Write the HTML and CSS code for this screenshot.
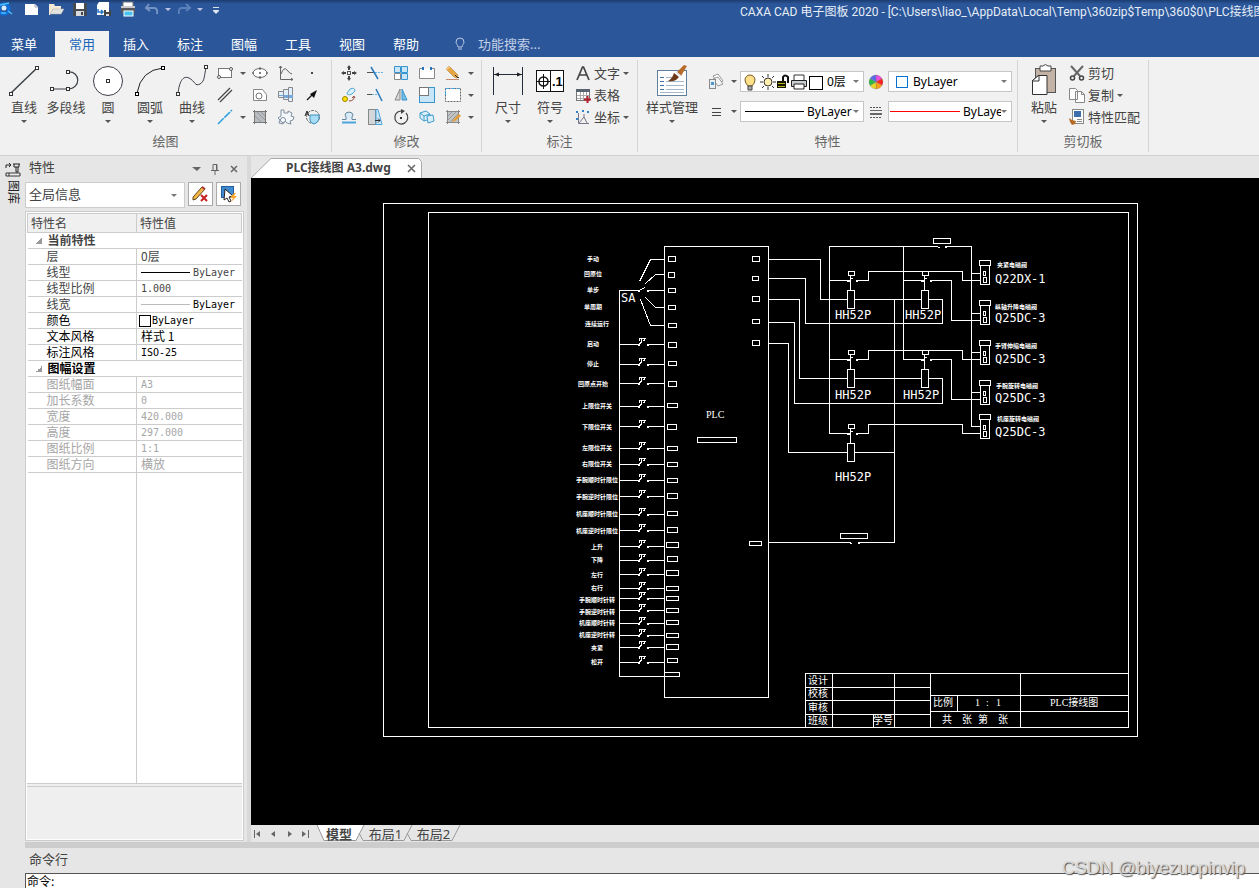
FILE: index.html
```html
<!DOCTYPE html>
<html lang="zh-CN">
<head>
<meta charset="utf-8">
<title>CAXA CAD 电子图板 2020</title>
<link rel="stylesheet" href="styles.css">
</head>
<body>
<div class="app">
<header class="titlebar">
  <div class="quick">
    <svg class="logo" width="14" height="16" viewBox="0 0 14 16"><circle cx="4" cy="8" r="5" fill="none" stroke="#0b6fe0" stroke-width="3"/><circle cx="4" cy="7" r="2.500" fill="#d7ecff"/><path d="M0 4L9 2M8 10l4 3M1 12h5" stroke="#48c0ff" stroke-width="1.500"/></svg>
    <button class="q" aria-label="新建"><svg width="16" height="16"><path d="M1 3h10l3 3v8H1z" fill="#fff"/><path d="M11 3v3h3" fill="none" stroke="#9aa7bd"/></svg></button>
    <button class="q" aria-label="打开"><svg width="16" height="16"><path d="M1 3h5l1 2h6v3H5l-3 6H1z" fill="#f3e9d6"/><path d="M5 8h11l-3 5H2z" fill="#e2e2e0" stroke="#b6b0a4" stroke-width=".5"/></svg></button>
    <button class="q" aria-label="保存"><svg width="16" height="16"><rect x="1" y="2" width="14" height="13" rx="1" fill="#444a52"/><rect x="4" y="2" width="8" height="6" fill="#fff"/><rect x="4" y="10" width="8" height="5" fill="#d6dade"/><rect x="9" y="11" width="2" height="3" fill="#444"/></svg></button>
    <button class="q" aria-label="另存为"><svg width="16" height="16"><path d="M3 1h10v13H1V4z" fill="#fff"/><path d="M2 8v3h5M5 9l2 2-2 2" fill="none" stroke="#2878c8" stroke-width="1.500"/><rect x="8" y="9" width="7" height="6" fill="#444"/><rect x="10" y="9" width="3" height="2" fill="#fff"/><rect x="10" y="13" width="3" height="2" fill="#ddd"/></svg></button>
    <button class="q" aria-label="打印"><svg width="16" height="16"><rect x="3" y="1" width="10" height="5" fill="#fff" stroke="#777"/><rect x="1" y="6" width="14" height="6" fill="#55585c"/><rect x="1" y="5" width="14" height="2" fill="#c9c9c9"/><rect x="4" y="10" width="9" height="5" fill="#43c3ee" stroke="#fff"/></svg></button>
    <button class="q" aria-label="撤销"><svg width="16" height="16"><path d="M5 3L2 7l4 3M2 7h8q4 0 3 6" fill="none" stroke="#7593c3" stroke-width="2"/></svg></button>
    <button class="q narrow" aria-label="撤销列表"><span class="caret light"></span></button>
    <button class="q" aria-label="重做"><svg width="16" height="16"><path d="M10 3l4 4-4 3M14 7H6q-4 0-3 6" fill="none" stroke="#5b80ba" stroke-width="2"/></svg></button>
    <button class="q narrow" aria-label="重做列表"><span class="caret light"></span></button>
    <button class="q" aria-label="自定义"><svg width="16" height="16"><path d="M5 6.500h6M5 9.500h6" stroke="#dce4f0"/><path d="M5 10h6l-3 3z" fill="#dce4f0"/></svg></button>
  </div>
  <h1 class="title">CAXA CAD 电子图板 2020 - [C:\Users\liao_\AppData\Local\Temp\360zip$Temp\360$0\PLC接线图</h1>
</header>
<nav class="tabs">
  <button class="tab menu">菜单</button><button class="tab active">常用</button><button class="tab">插入</button><button class="tab">标注</button><button class="tab">图幅</button><button class="tab">工具</button><button class="tab">视图</button><button class="tab">帮助</button>
  <label class="search"><svg width="12" height="14"><path d="M4 10C4 8 2 7 2 5a4 4 0 018 0c0 2-2 3-2 5zM4 12h4" fill="none" stroke="#b9c8e0"/></svg><input type="text" aria-label="功能搜索" placeholder="功能搜索..."></label>
</nav>

<section class="ribbon">
  <div class="group g-draw">
    <div class="body">
      <button class="big"><svg width="34" height="34"><path d="M4 29L30 4" stroke="#3c4048" stroke-width="1.500"/><g fill="#fff" stroke="#333"><rect x="2.500" y="28.500" width="3" height="3"/><rect x="28.500" y="2.500" width="3" height="3"/></g></svg><span>直线</span><i class="caret"></i></button>
      <button class="big"><svg width="34" height="34"><path d="M3 25H19M19 8C32 7 32 25 19 25" fill="none" stroke="#3c4048" stroke-width="1.200"/><g fill="#fff" stroke="#333"><rect x="1.500" y="23.500" width="3" height="3"/><rect x="17.500" y="23.500" width="3" height="3"/><rect x="17.500" y="6.500" width="3" height="3"/></g></svg><span>多段线</span></button>
      <button class="big"><svg width="34" height="34"><circle cx="17" cy="17" r="14.500" fill="#fff" stroke="#3c4048"/><rect x="15.500" y="15.500" width="3" height="3" fill="none" stroke="#333"/></svg><span>圆</span><i class="caret"></i></button>
      <button class="big"><svg width="34" height="34"><path d="M4 29Q8 6 30 4" fill="none" stroke="#222"/><g fill="#fff" stroke="#000"><rect x="2.500" y="28.500" width="3" height="3"/><rect x="28.500" y="2.500" width="3" height="3"/></g></svg><span>圆弧</span><i class="caret"></i></button>
      <button class="big"><svg width="34" height="34"><path d="M3 30C4 18 8 11 14 14S20 23 25 20 29 12 31 4" fill="none" stroke="#3c4048"/><g fill="#fff" stroke="#333"><rect x="1.500" y="28.500" width="3" height="3"/><rect x="29.500" y="1.500" width="3" height="3"/></g></svg><span>曲线</span><i class="caret"></i></button>
      <div class="tools draw">
        <button aria-label="矩形"><svg width="16" height="16"><rect x="1.500" y="3.500" width="13" height="9" fill="#fff" stroke="#777"/><circle cx="2" cy="12" r="1.500" fill="#fff" stroke="#555"/><circle cx="14" cy="4" r="1.500" fill="#fff" stroke="#555"/></svg></button>
        <button aria-label="矩形选项"><i class="caret"></i></button>
        <button aria-label="椭圆"><svg width="16" height="16"><ellipse cx="8" cy="8" rx="7" ry="4.500" fill="#fff" stroke="#666"/><path d="M8 2v3M8 7v2M0 8h2M14 8h2M8 11v3M7 8h2" stroke="#555"/></svg></button>
        <button aria-label="公式曲线"><svg width="16" height="16"><path d="M2.500 1v13.500H15M3 9Q6 1 9 5T14 9" fill="none" stroke="#666"/><path d="M1 3l1.500-2L4 3M13 13l2 1.500-2 1" fill="none" stroke="#666"/></svg></button>
        <button aria-label="点"><svg width="16" height="16"><rect x="7" y="7" width="2" height="2" fill="#444"/></svg></button>
        <button aria-label="平行线"><svg width="16" height="16"><path d="M1 13L13 1M3 15L15 3" stroke="#444" stroke-width="1.200"/></svg></button><span></span>
        <button aria-label="填充"><svg width="16" height="16"><path d="M1.500 2.500h9l4 5v6h-13z" fill="#fff" stroke="#888"/><circle cx="7" cy="9" r="3" fill="none" stroke="#777"/></svg></button>
        <button aria-label="轴孔"><svg width="16" height="16"><path d="M.5 4.500h5v-2h5v-2h4v14h-4v-2h-5v-2h-5z" fill="#e1f0fb" stroke="#888"/><path d="M1 8h14v3H5V9H1z" fill="#75a9da"/><path d="M5.500 3v9M10.500 1v13" stroke="#889"/></svg></button>
        <button aria-label="箭头"><svg width="16" height="16"><path d="M3 13L9 7" stroke="#222" stroke-width="1.500"/><path d="M13 3l-3 8-4-4z" fill="#111"/></svg></button>
        <button aria-label="构造线"><svg width="16" height="16"><path d="M1 15L15 1" stroke="#29a0dc" stroke-width="1.500" stroke-dasharray="8 1"/></svg></button>
        <button aria-label="构造线选项"><i class="caret"></i></button>
        <button aria-label="剖面线"><svg width="16" height="16"><rect x="2.500" y="2.500" width="11" height="11" fill="#b8bcc0"/><path d="M1 2.500h14M1 13.500h14M2.500 1v14M13.500 1v14" stroke="#777"/><path d="M5 3l8 8M3 7l6 6M9 3l4 4" stroke="#999"/></svg></button>
        <button aria-label="齿轮"><svg width="16" height="16"><path d="M3 1h3v3h4V2l4 2-1 3 3 1-1 3-3 1 1 3-4-1-2-2-2 3-4-1 1-3-2-2 3-2z" fill="#f4f8fb" stroke="#8090a0"/><circle cx="5" cy="11" r="2.500" fill="#fff" stroke="#789"/></svg></button>
        <button aria-label="局部放大"><svg width="16" height="16"><circle cx="9" cy="8" r="6.500" fill="none" stroke="#666" stroke-dasharray="3 1"/><path d="M6 6h9v4q-1 4-5 5-4-1-4-4z" fill="#a7dcf4" stroke="#3d91be"/><path d="M1 7l2-5 2 5M2 5h2" fill="none" stroke="#222"/></svg></button>
      </div>
    </div>
    <h2>绘图</h2>
  </div>
  <div class="group g-edit">
    <div class="body">
      <div class="tools edit">
        <button aria-label="平移"><svg width="16" height="16"><path d="M8 0l2 3H6zM8 16l2-3H6zM0 8l3-2v4zM16 8l-3-2v4z" fill="#444"/><rect x="6.500" y="6.500" width="3" height="3" fill="none" stroke="#555"/><path d="M8 3v2M8 11v2M3 8h2M11 8h2" stroke="#444" stroke-width="2"/></svg></button>
        <button aria-label="裁剪"><svg width="16" height="16"><path d="M0 7.500h8" stroke="#555"/><path d="M8 7.500h8" stroke="#69b4e0" stroke-dasharray="2 1"/><path d="M4 2l7 12" stroke="#2879bd" stroke-width="1.500"/></svg></button>
        <button aria-label="阵列"><svg width="16" height="16"><g fill="#c9e5f8" stroke="#3794cf"><path d="M1.500 1.500h6v6h-6zM8.500 1.500h6v6h-6zM8.500 8.500h6v6h-6z"/></g><path d="M1.500 8.500h6v6h-6z" fill="#fff" stroke="#888"/></svg></button>
        <button aria-label="打断"><svg width="16" height="16"><path d="M5 3.500H.5v10h15v-10H11" fill="#fff" stroke="#888"/><rect x="3" y="2" width="2" height="3" fill="#2177c3"/><rect x="11" y="2" width="2" height="3" fill="#2177c3"/></svg></button>
        <button aria-label="删除"><svg width="16" height="16"><path d="M1 4l3-3 9 9-1 3-3-1z" fill="#e6a743" stroke="#ad7423" stroke-width=".5"/><path d="M1 4l3-3 1 1-3 3z" fill="#f7cf96"/><path d="M10 10l3 3 1-1" stroke="#333" fill="none"/><path d="M1 14.500h13" stroke="#c68a70"/></svg></button>
        <button aria-label="删除选项"><i class="caret"></i></button>
        <button aria-label="复制"><svg width="16" height="16"><circle cx="4" cy="12" r="2.500" fill="#ffe100" stroke="#9a8400"/><path d="M6 6l3-4q5-2 5 2l-3 3q-5 2-5-1z" fill="#d9effb" stroke="#54a9d6"/><path d="M8 14q5 0 5-4M11 11l2-2 1 2" fill="none" stroke="#9c4940"/></svg></button>
        <button aria-label="延伸"><svg width="16" height="16"><path d="M0 7.500h5" stroke="#555"/><path d="M5 7.500h7" stroke="#69b4e0" stroke-dasharray="2 1"/><path d="M9 2l6 12" stroke="#2879bd" stroke-width="1.500"/></svg></button>
        <button aria-label="镜像"><svg width="16" height="16"><path d="M7 2v11H2z" fill="#d8d8d8" stroke="#888"/><path d="M9 2v11h5z" fill="#75bce4" stroke="#3794cf"/></svg></button>
        <button aria-label="缩放"><svg width="16" height="16"><rect x=".5" y=".5" width="15" height="15" fill="#c9e5f8" stroke="#3794cf"/><rect x=".5" y=".5" width="9" height="8" fill="#fff" stroke="#777"/></svg></button>
        <button aria-label="选择框"><svg width="16" height="16"><rect x=".5" y="1.500" width="15" height="13" fill="#fff" stroke="#666" stroke-dasharray="2 1"/><path d="M.5 8V1.500H15" fill="none" stroke="#4aa5df" stroke-dasharray="4 2"/></svg></button>
        <button aria-label="选择选项"><i class="caret"></i></button>
        <button aria-label="等距线"><svg width="16" height="16"><path d="M1 10.500h4V8q-2-2 0-4 3-2 6 0 2 2 0 4v2.500h4" fill="#d8eaf5" stroke="#63869d"/><path d="M1 13.500h14" stroke="#4aa5df" stroke-width="2"/></svg></button>
        <button aria-label="拉伸"><svg width="16" height="16"><rect x="1.500" y=".5" width="7" height="15" fill="#d3d7da" stroke="#888"/><path d="M9 .5h2l4 15H9z" fill="#cce8f8" stroke="#4aa5df"/><path d="M8 11.500h5m-2-2l2 2-2 2" fill="none" stroke="#333"/></svg></button>
        <button aria-label="旋转"><svg width="16" height="16"><path d="M8 2a6.500 6.500 0 105 2" fill="none" stroke="#444" stroke-width="1.200"/><path d="M8 0l4 2-4 3z" fill="#444"/><rect x="7" y="8" width="2" height="2" fill="#333"/></svg></button>
        <button aria-label="分解"><svg width="16" height="16"><path d="M1 4l6-2 4 3v5l-6 2-4-3zM5 7l6-2M5 7v5M1 4l4 3" fill="#d9effb" stroke="#429dcc"/><path d="M8 7l6-1 1 6-6 2z" fill="#d9effb" stroke="#429dcc"/></svg></button>
        <button aria-label="编辑填充"><svg width="16" height="16"><path d="M1 2.500h14M1 13.500h14M2.500 1v14M13.500 1v14" stroke="#888"/><rect x="3" y="3" width="10" height="10" fill="#c2c5c8"/><path d="M3 7l4-4M3 11l8-8M5 13l8-8" stroke="#999"/><path d="M8 11l6-6 2 2-6 5-3 1z" fill="#e39d35"/></svg></button>
        <button aria-label="填充选项"><i class="caret"></i></button>
      </div>
    </div>
    <h2>修改</h2>
  </div>
  <div class="group g-note">
    <div class="body">
      <button class="big"><svg width="34" height="34"><path d="M2.500 3v28M31.500 3v28M3 10.500h28" stroke="#222c3a"/><path d="M3 10.500l5-2v4zM31 10.500l-5-2v4z" fill="#222"/></svg><span>尺寸</span><i class="caret"></i></button>
      <button class="big"><svg width="34" height="34"><rect x="3.500" y="6.500" width="27" height="21" fill="#fff" stroke="#111"/><path d="M17.500 6v22M4 17.500h13M10.500 10v15" stroke="#111"/><circle cx="10.500" cy="17.500" r="4.500" fill="none" stroke="#111" stroke-width="1.500"/><text x="19" y="22" class="tolerance">.1</text></svg><span>符号</span><i class="caret"></i></button>
      <div class="list">
        <button><svg width="16" height="16"><path d="M2 15L7.500 2h1L14 15M4 10h8" fill="none" stroke="#444" stroke-width="1.700"/></svg>文字<i class="caret"></i></button>
        <button><svg width="16" height="16"><rect x="1.500" y="2.500" width="13" height="11" fill="#fff" stroke="#777"/><path d="M1 2h14v3H1z" fill="#596470"/><path d="M2 8.500h12M2 11.500h12M5.500 5v8M8.500 5v8M11.500 5v8" stroke="#aaa"/><path d="M12.500 9v7M9 12.500h7" stroke="#b71e2d" stroke-width="2"/></svg>表格</button>
        <button><svg width="16" height="16"><path d="M3.500 4v10.500H14M4 14l5-6 3 6M9 8V5" fill="none" stroke="#778"/><g fill="#2f83cb"><rect x="1" y="2" width="2" height="2"/><rect x="7" y="1" width="2" height="2"/><rect x="12" y="2" width="2" height="2"/><rect x="1" y="9" width="2" height="2"/></g></svg>坐标<i class="caret"></i></button>
      </div>
    </div>
    <h2>标注</h2>
  </div>
  <div class="group g-prop">
    <div class="body">
      <button class="big wide"><svg width="34" height="34"><rect x="2.500" y="6.500" width="29" height="25" fill="#fff" stroke="#5f7f9c"/><path d="M5 13.500h4M5 17.500h4M5 21.500h4M5 25.500h4" stroke="#4670a0"/><path d="M11 13.500h8M11 17.500h18M11 21.500h18M11 25.500h18M5 28.500h24" stroke="#a7b7cb"/><path d="M22 8l7-7 3 1-6 10z" fill="#b66b28"/><path d="M19 9l5 4-3 3q-4 2-8 1 4-2 6-8z" fill="#6d3a18"/><path d="M21 8l5 4" stroke="#ddd" stroke-width="1.500"/></svg><span>样式管理</span><i class="caret"></i></button>
      <div class="props">
        <button class="split" aria-label="图层工具"><svg width="16" height="16"><path d="M5 2l5-2 5 7-5 2z" fill="#fff" stroke="#999"/><path d="M5 5l5-2 5 7-5 2z" fill="#f4f4f4" stroke="#999"/><rect x="1.500" y="5.500" width="6" height="9" fill="#e7f0f7" stroke="#888"/><rect x="3" y="8" width="3" height="3" fill="#4b95c7"/></svg><i class="caret"></i></button>
        <div class="combo">
          <svg width="84" height="20" viewBox="0 0 84 20"><path d="M7 14q-3-3-3-6a5 5 0 0110 0q0 3-3 6z" fill="#ffe08a" stroke="#775a20"/><path d="M7 14h4v4H7z" fill="#aaa" stroke="#444"/><circle cx="27" cy="10" r="4" fill="#fff0b0" stroke="#333"/><path d="M27 2v3M27 15v3M19 10h3M32 10h3M21 4l2 2M31 14l2 2M33 4l-2 2M21 16l2-2" stroke="#333"/><path d="M36 9h9v7h-9z" fill="#171700"/><path d="M37 11.500h7M37 14.500h7" stroke="#b7b521"/><path d="M42 9V5q2-3 5 0v6" fill="none" stroke="#111" stroke-width="2"/><path d="M53 8V3h10v5" fill="#fff" stroke="#333"/><path d="M50.500 8.500h15v6h-15z" fill="#c9ced3" stroke="#222"/><path d="M53 12h10v5H53z" fill="#fff" stroke="#222"/><rect x="68.500" y="4.500" width="13" height="13" fill="#fff" stroke="#000"/></svg>
          <select aria-label="图层"><option>0层</option></select><i class="caret"></i>
        </div>
        <svg class="mid" width="16" height="16"><g stroke="#777" stroke-width=".3"><path d="M8 8V1a7 7 0 016 3.500z" fill="#f04be0"/><path d="M8 8l6-3.500a7 7 0 010 7z" fill="#f22"/><path d="M8 8l6 3.500A7 7 0 018 15z" fill="#ff9d18"/><path d="M8 8v7a7 7 0 01-6-3.500z" fill="#e8d82a"/><path d="M8 8l-6 3.500a7 7 0 010-7z" fill="#2abb46"/><path d="M8 8L2 4.500A7 7 0 018 1z" fill="#5d6be8"/></g></svg>
        <div class="combo">
          <svg width="22" height="20"><rect x="7.500" y="4.500" width="11" height="11" fill="#fff" stroke="#0073d4"/></svg>
          <select aria-label="颜色"><option>ByLayer</option></select><i class="caret"></i>
        </div>
        <button class="split" aria-label="线型工具"><svg width="16" height="16"><path d="M4 4.500h9M4 8.500h9M4 11.500h9" stroke="#444"/></svg><i class="caret"></i></button>
        <div class="combo">
          <svg width="64" height="19"><path d="M4 9.500h59" stroke="#000"/></svg>
          <select aria-label="线型"><option>ByLayer</option></select><i class="caret"></i>
        </div>
        <svg class="mid" width="16" height="16"><path d="M2 3.500h12M2 13.500h12" stroke="#555" stroke-dasharray="2 1"/><path d="M2 6.500h12" stroke="#666"/><path d="M2 10h12" stroke="#666" stroke-width="2"/></svg>
        <div class="combo">
          <svg width="72" height="19"><path d="M1 9.500h70" stroke="#f00"/></svg>
          <select aria-label="线宽"><option>ByLayer</option></select><i class="caret"></i>
        </div>
      </div>
    </div>
    <h2>特性</h2>
  </div>
  <div class="group g-clip">
    <div class="body">
      <button class="big"><svg width="34" height="34"><rect x="8.500" y="4.500" width="20" height="24" fill="#c3b3a6" stroke="#555"/><path d="M13 2h3q2-3 5 0h3v5H13z" fill="#fff" stroke="#444"/><path d="M11.500 11.500H20v19H5.500v-14z" fill="#fff" stroke="#333"/><path d="M5 17l7-6v6z" fill="#fff" stroke="#333"/></svg><span>粘贴</span><i class="caret"></i></button>
      <div class="list">
        <button><svg width="16" height="16"><path d="M2 1l9 10M14 1L5 11" stroke="#666" stroke-width="2"/><circle cx="3.500" cy="13" r="2" fill="none" stroke="#444" stroke-width="1.500"/><circle cx="12.500" cy="13" r="2" fill="none" stroke="#444" stroke-width="1.500"/></svg>剪切</button>
        <button><svg width="16" height="16"><path d="M.5 1.500h6l2 2v9h-8zM6.500 4.500h6l3 3v8h-9z" fill="#fff" stroke="#888"/><path d="M12.500 4.500v3h3" fill="none" stroke="#888"/></svg>复制<i class="caret"></i></button>
        <button><svg width="16" height="16"><rect x="3.500" y=".5" width="11" height="14" fill="#fff" stroke="#888"/><rect x="5" y="2" width="7" height="6" fill="#3c6eac"/><path d="M8 10.500h5M8 12.500h5" stroke="#888"/><path d="M0 9l3 2 4 1-1 3-3 1-2-3z" fill="#b76b28"/></svg>特性匹配</button>
      </div>
    </div>
    <h2>剪切板</h2>
  </div>
</section>

<main class="workspace">
  <aside class="rail"><button><svg width="16" height="15"><path d="M1 6V3h5M4 1l2 2-2 2M8 2h7M9 2v3h5V2M11 5v5h2V5" fill="none" stroke="#222"/><path d="M1 11h14v3H1zM4 11v3" fill="#eee" stroke="#333"/></svg><span>图库</span></button></aside>
  <div class="content">
    <div class="upper">
      <aside class="panel">
        <div class="panel-head"><h2>特性</h2>
          <button aria-label="菜单"><svg width="12" height="12"><path d="M2 4h9l-4 4z" fill="#666"/></svg></button>
          <button aria-label="固定"><svg width="12" height="12"><path d="M4 7V1.500h4V7M7.500 2v5M2 7.500h8M6 8v4" fill="none" stroke="#666"/></svg></button>
          <button aria-label="关闭"><svg width="12" height="12"><path d="M3 3l6 6M9 3l-6 6" stroke="#666" stroke-width="1.500"/></svg></button>
        </div>
        <div class="picker">
          <div class="scope"><select aria-label="选择范围"><option>全局信息</option></select><i class="caret"></i></div>
          <button aria-label="清除选择"><svg width="18" height="18"><path d="M1 12L10 2l3 2L4 14l-3 1z" fill="#f1b548" stroke="#5f4720"/><path d="M10 2l3 2" stroke="#a33" stroke-width="2"/><path d="M9 10l6 6M15 10l-6 6" stroke="#c5221d" stroke-width="2"/></svg></button>
          <button aria-label="快速选择"><svg width="18" height="18"><rect x="1.500" y="1.500" width="12" height="11" fill="#3f8bd0" stroke="#235f9c"/><path d="M5 4l8 7-4 1 2 4-2 1-2-4-3 2z" fill="#fff" stroke="#222"/><path d="M14 8l-4 5h3l-2 4 6-6h-3l2-3z" fill="#ffa62a"/></svg></button>
        </div>
        <div class="grid-frame">
          <table>
            <thead><tr><th scope="col">特性名</th><th scope="col">特性值</th></tr></thead>
            <tbody>
              <tr class="section"><th colspan="2">当前特性</th></tr>
              <tr><th scope="row">层</th><td>0层</td></tr>
              <tr><th scope="row">线型</th><td class="line"><span class="mono"><i class="stroke dark"></i>ByLayer</span></td></tr>
              <tr><th scope="row">线型比例</th><td class="mono">1.000</td></tr>
              <tr><th scope="row">线宽</th><td class="line strong"><span class="mono"><i class="stroke"></i>ByLayer</span></td></tr>
              <tr class="strong"><th scope="row">颜色</th><td class="color"><span class="mono"><i class="swatch"></i>ByLayer</span></td></tr>
              <tr class="strong"><th scope="row">文本风格</th><td>样式 1</td></tr>
              <tr class="strong"><th scope="row">标注风格</th><td class="mono">ISO-25</td></tr>
              <tr class="section strong"><th colspan="2">图幅设置</th></tr>
              <tr class="off"><th scope="row">图纸幅面</th><td class="mono">A3</td></tr>
              <tr class="off"><th scope="row">加长系数</th><td class="mono">0</td></tr>
              <tr class="off"><th scope="row">宽度</th><td class="mono">420.000</td></tr>
              <tr class="off"><th scope="row">高度</th><td class="mono">297.000</td></tr>
              <tr class="off"><th scope="row">图纸比例</th><td class="mono">1:1</td></tr>
              <tr class="off"><th scope="row">图纸方向</th><td>横放</td></tr>
            </tbody>
          </table>
          <div class="blank"><span></span></div>
          <div class="hint"></div>
        </div>
      </aside>
      <section class="document">
        <div class="doc-tabs"><div class="doc-tab"><svg width="171" height="20"><path d="M0 20L20 .5H167.500L170.500 3.500V20" fill="#fff" stroke="#aaa"/></svg><span>PLC接线图 A3.dwg</span><button aria-label="关闭文档"><svg width="9" height="9"><path d="M1 1l7 7M8 1L1 8" stroke="#666" stroke-width="1.500"/></svg></button></div></div>
        <div class="canvas">
          <svg class="drawing" width="100%" height="100%" role="img" aria-label="PLC接线图">
            <defs>
              <g id="sw"><path d="M619 0H639M646 0H664M638 0L642 -3M641 -2V-6M639 -4V-6H645M644 -6V-4H642"/><path d="M637 1h2M646 1h2"/></g>
              <g id="relay"><path d="M-4 10H3V28H-4ZM-1 -5V10M-4 1L2 -3M-4 1h2M4 1h2"/><path d="M-3 -9H3V-5H-3Z"/></g>
              <g id="valve"><path d="M979 -24H990V-19H979ZM980 -19H989V0H980ZM983 -13H985V-9H983ZM983 -7H986V-2H983Z"/></g>
            </defs>
            <g class="ink" transform="translate(-250.500 -177.500)">
              <path d="M383 203H1137V736H383ZM428 212H1128V727H428Z"/>
              <path d="M664 246H768V697H664ZM697 437H736V442H697Z"/>
              <path d="M638 290H619V676H664M664 259H650L639 281M664 274H655L645 283M664 290H646M638 290L645 287M664 307H655L645 297M664 325H650L640 299M637 291h2M646 291h2"/>
              <path d="M668 256h7v5h-7zM668 272h6v5h-6zM668 288h7v4h-7zM668 305h7v4h-7zM668 323h8v4h-8zM668 342h8v5h-8zM668 361h8v4h-8zM668 381h8v5h-8zM667 403h10v4h-10zM667 424h9v5h-9zM667 446h10v4h-10zM667 462h10v4h-10zM667 478h10v4h-10zM667 493h10v5h-10zM667 511h10v4h-10zM667 527h10v5h-10zM666 542h12v5h-12zM667 556h10v5h-10zM666 570h12v5h-12zM666 586h12v4h-12zM666 596h12v4h-12zM666 608h12v4h-12zM666 620h12v4h-12zM666 633h12v4h-12zM666 644h12v5h-12zM667 658h10v4h-10zM664 672h15v4h-15z"/>
              <path d="M752 256h7v5h-7zM752 276h6v4h-6zM752 296h7v5h-7zM752 319h7v4h-7zM752 340h7v5h-7zM749 541h12v4h-12z"/>
              <use href="#sw" y="344"/><use href="#sw" y="364"/><use href="#sw" y="383"/><use href="#sw" y="406"/><use href="#sw" y="426"/><use href="#sw" y="448"/><use href="#sw" y="464"/><use href="#sw" y="480"/><use href="#sw" y="496"/><use href="#sw" y="514"/><use href="#sw" y="530"/><use href="#sw" y="546"/><use href="#sw" y="560"/><use href="#sw" y="574"/><use href="#sw" y="588"/><use href="#sw" y="598"/><use href="#sw" y="610"/><use href="#sw" y="623"/><use href="#sw" y="635"/><use href="#sw" y="647"/><use href="#sw" y="662"/>
              <path d="M768 259H820V299H847M768 278H805V323H942V299H928M768 299H799V378H847M768 322H794V403H942V378H928M768 343H788V452H847M854 299H921M854 378H921M854 452H894"/>
              <path d="M768 542H850M857 542H894V298M849 543h2M857 543h2M840 533H867V538H840Z"/>
              <path d="M847 433H829V246H937M944 246H971V426H980M937 247h2M944 247h2M933 238H950V243H933ZM903 246V359H921M903 280H921M829 280H847M829 359H847"/>
              <path d="M971 273H980M971 313H980M971 352H980M971 392H980"/>
              <path d="M855 280H868V271H962V280H980M929 280H951V320H980M855 359H868V350H962V359H980M929 359H951V399H980M855 433H868V424H962V433H980"/>
              <use href="#relay" x="851" y="280"/><use href="#relay" x="925" y="280"/><use href="#relay" x="851" y="359"/><use href="#relay" x="925" y="359"/><use href="#relay" x="851" y="433"/>
              <use href="#valve" y="284"/><use href="#valve" y="324"/><use href="#valve" y="364"/><use href="#valve" y="404"/><use href="#valve" y="438"/>
              <path d="M805 727V673H1128M832 673V727M873 714V727M894 673V727M930 673V727M957 695V711M1020 673V727M805 687H930M805 700H930M805 714H930M930 695H1128M930 711H1128"/>
            </g>
            <g class="lettering" transform="translate(-251 -178)">
              <g class="tag"><text x="593" y="261">手动</text><text x="593" y="276">回原位</text><text x="593" y="292">单步</text><text x="593" y="309">单周期</text><text x="597" y="326">连续运行</text><text x="593" y="346">启动</text><text x="593" y="366">停止</text><text x="593" y="386">回原点开始</text><text x="597" y="408">上限位开关</text><text x="597" y="429">下限位开关</text><text x="597" y="450">左限位开关</text><text x="597" y="466">右限位开关</text><text x="597" y="482">手腕顺时针限位</text><text x="597" y="499">手腕逆时针限位</text><text x="597" y="516">机座顺时针限位</text><text x="597" y="533">机座逆时针限位</text><text x="597" y="549">上升</text><text x="597" y="562">下降</text><text x="597" y="577">左行</text><text x="597" y="590">右行</text><text x="597" y="602">手腕顺时针转</text><text x="597" y="614">手腕逆时针转</text><text x="597" y="625">机座顺时针转</text><text x="597" y="637">机座逆时针转</text><text x="597" y="650">夹紧</text><text x="597" y="664">松开</text>
              <text x="1012" y="267">夹紧电磁阀</text><text x="1016" y="309">纵轴升降电磁阀</text><text x="1016" y="348">手臂伸缩电磁阀</text><text x="1017" y="388">手腕旋转电磁阀</text><text x="1018" y="421">机座旋转电磁阀</text></g>
              <g class="cad"><text x="621" y="302">SA</text><text x="835" y="319">HH52P</text><text x="905" y="319">HH52P</text><text x="835" y="399">HH52P</text><text x="903" y="399">HH52P</text><text x="835" y="481">HH52P</text><text x="995" y="283">Q22DX-1</text><text x="995" y="322">Q25DC-3</text><text x="995" y="363">Q25DC-3</text><text x="995" y="402">Q25DC-3</text><text x="995" y="436">Q25DC-3</text></g>
              <g class="block"><text x="706" y="418">PLC</text><text x="808" y="684">设计</text><text x="808" y="697">校核</text><text x="808" y="711">审核</text><text x="808" y="724">班级</text><text x="873" y="724">学号</text><text x="933" y="706">比例</text><text x="975" y="706">1</text><text x="986" y="706">:</text><text x="996" y="706">1</text><text x="1050" y="706">PLC接线图</text><text x="942" y="723">共</text><text x="962" y="723">张</text><text x="978" y="723">第</text><text x="998" y="723">张</text></g>
            </g>
          </svg>
        </div>
        <div class="layouts">
          <div class="nav">
            <button aria-label="第一个"><svg width="9" height="8"><path d="M1.500 0v8" stroke="#666"/><path d="M7 1v6L3 4z" fill="#666"/></svg></button>
            <button aria-label="上一个"><svg width="9" height="8"><path d="M6 1v6L2 4z" fill="#666"/></svg></button>
            <button aria-label="下一个"><svg width="9" height="8"><path d="M3 1v6l4-3z" fill="#666"/></svg></button>
            <button aria-label="最后一个"><svg width="9" height="8"><path d="M1 1v6l4-3z" fill="#666"/><path d="M7.500 0v8" stroke="#666"/></svg></button>
          </div>
          <button class="sheet on"><svg width="50" height="17"><path d="M1 0l7 15.500h32L48 0" fill="#fff" stroke="#999"/></svg><span>模型</span></button>
          <button class="sheet"><svg width="50" height="17"><path d="M-5 8l4 7.500H40L48 0" fill="none" stroke="#999"/></svg><span>布局1</span></button>
          <button class="sheet"><svg width="50" height="17"><path d="M-5 8l4 7.500H40L48 0" fill="none" stroke="#999"/></svg><span>布局2</span></button>
        </div>
      </section>
    </div>
    <div class="splitter"></div>
    <section class="command">
      <h2>命令行</h2>
      <label class="prompt">命令:<input type="text" aria-label="命令"></label>
    </section>
  </div>
</main>
<p class="watermark">CSDN @biyezuopinvip</p>
</div>
</body>
</html>
```
FILE: styles.css
```css
* { box-sizing: border-box; }
body { margin: 0; font: 13px/18px "Noto Sans", "Noto Sans CJK SC", sans-serif; color: #444; }
button, input, select { font: inherit; color: inherit; border: 0; background: none; padding: 0; margin: 0; }
h1, h2, p { margin: 0; font-size: 13px; font-weight: 400; }
svg { display: block; flex: none; overflow: visible; }
.app { position: relative; height: 100vh; display: flex; flex-direction: column; overflow: hidden; background: #e6e6e6; }
.caret { flex: none; width: 6px; height: 3px; border: 3px solid transparent; border-top-color: #555; border-bottom: 0; }
.caret.light { border-top-color: #b9c8e0; }

.titlebar { flex: none; height: 31px; display: grid; grid-template-columns: 740px 1fr; background: linear-gradient(#1c3c70, #2b579a 4px); color: #e6edf7; }
.quick { display: flex; height: 18px; align-items: center; }
.logo { margin-right: 10px; }
.q { width: 16px; height: 16px; margin-right: 8px; display: grid; place-items: center; }
.q.narrow { width: 8px; margin-right: 4px; margin-left: -4px; }
.title { font: 12px/24px Roboto, "Noto Sans CJK SC", sans-serif; white-space: nowrap; }

.tabs { flex: none; height: 26px; display: flex; background: #2b579a; color: #fff; }
.tab { width: 54px; text-align: center; line-height: 24px; }
.tab.menu { width: 48px; margin-right: 7px; }
.tab.active { background: #f1f1f1; color: #1a67b8; }
.search { display: flex; align-items: center; gap: 12px; margin-left: 21px; color: #c3d0e6; }
.search input { width: 160px; line-height: 24px; }
.search input::placeholder { color: #c3d0e6; opacity: 1; }

.ribbon { flex: none; height: 99px; display: flex; padding-top: 3px; background: #f1f1f1; border-bottom: 1px solid #d2d2d2; }
.group { flex: none; height: 92px; padding-top: 2px; border-right: 1px solid #d5d5d5; }
.group h2 { height: 20px; margin-top: 4px; line-height: 18px; text-align: center; color: #666; }
.body { height: 66px; display: flex; }
.g-draw { width: 332px; }
.g-edit { width: 150px; }
.g-note { width: 156px; }
.g-prop { width: 380px; }
.g-clip { width: 131px; }
.g-draw .body { padding-left: 3px; }
.g-edit .body, .g-prop .body { padding-left: 4px; }
.g-note .body, .g-clip .body { padding-left: 5px; }
.big { width: 42px; padding-top: 2px; display: flex; flex-direction: column; align-items: center; white-space: nowrap; }
.big .caret { margin-top: 4px; }
.big.wide { width: 60px; }
.tolerance { font: bold 13px "Liberation Sans", sans-serif; fill: #000; }
.tools { display: grid; grid-auto-rows: 22px; }
.tools button { display: grid; place-items: center; }
.tools.draw { grid-template-columns: 26px 9px 26px 26px 26px; margin-left: -1px; }
.tools.edit { grid-template-columns: repeat(5, 26px) 9px; }
.list { padding-left: 2px; }
.list button { display: flex; align-items: center; gap: 3px; height: 22px; line-height: 20px; white-space: nowrap; padding-left: 2px; }
.props { display: grid; grid-template-columns: 30px 124px 16px 124px; grid-auto-rows: 21px; column-gap: 4px; row-gap: 9px; padding: 9px 0 0 4px; }
.props > * { min-width: 0; }
.split { display: flex; align-items: center; gap: 7px; padding-left: 2px; }
.mid { align-self: center; }
.combo { display: flex; align-items: center; padding-right: 4px; background: #fff; border: 1px solid #c6c6c6; color: #000; }
.combo select { appearance: none; flex: 1; min-width: 0; font-size: 12px; line-height: 18px; padding-left: 2px; }
.combo .caret, .scope .caret { border-top-color: #777; }

.workspace { flex: 1; min-height: 0; display: flex; }
.rail { flex: none; width: 25px; padding: 6px 0 0 5px; }
.rail button { display: flex; flex-direction: column; gap: 3px; color: #222; font-size: 12px; line-height: 15px; }
.rail span { writing-mode: vertical-rl; text-orientation: sideways; }
.content { flex: 1; min-width: 0; display: flex; flex-direction: column; }
.upper { flex: 1; min-height: 0; display: flex; }
.panel { flex: none; width: 220px; display: flex; flex-direction: column; }
.panel-head { height: 25px; display: flex; align-items: center; gap: 7px; padding: 0 5px 0 4px; }
.panel-head h2 { flex: 1; line-height: 22px; height: 25px; }
.picker { height: 28px; display: flex; align-items: flex-start; gap: 3px; padding-top: 1px; }
.picker button { width: 25px; height: 24px; display: grid; place-items: center; background: #fff; border: 1px solid #aaa; }
.scope { width: 160px; height: 26px; display: flex; align-items: center; padding: 0 7px 0 3px; background: #fff; border: 1px solid #ccc; }
.scope select { appearance: none; flex: 1; height: 24px; padding-bottom: 2px; }
.grid-frame { flex: 1; min-height: 0; display: flex; flex-direction: column; margin: 2px 1px 1px 0; padding: 1px; border: 1px solid #ccc; background: #fff; }
table { width: 100%; table-layout: fixed; border-collapse: collapse; font: 12px/13px "Noto Sans CJK SC", sans-serif; }
th, td { height: 16px; padding: 0 0 0 4px; border-bottom: 1px solid #ccc; text-align: left; vertical-align: top; font-weight: 400; white-space: nowrap; }
th[scope="row"] { width: 109px; padding-left: 19px; }
thead th { height: 19px; line-height: 17px; background: #f0f0f0; border: 1px solid #ccc; padding-left: 3px; }
thead th:first-child { width: 109px; }
td { border-left: 1px solid #ccc; }
.section th { font-weight: 700; padding-left: 20px; background: linear-gradient(135deg, transparent 50%, #999 50%) 8px 5px / 6px 6px no-repeat; }
.mono { font-family: "DejaVu Sans Mono", monospace; font-size: 10px; line-height: 15px; }
.line .mono, .color .mono { display: flex; align-items: center; height: 15px; }
.stroke { width: 49px; height: 1px; margin-right: 3px; background: #bbb; }
.stroke.dark { background: #000; }
.color { padding-left: 2px; }
.swatch { width: 12px; height: 12px; margin-right: 1px; border: 1px solid #000; }
.strong { color: #000; }
.off { color: #a6a6a6; }
.blank { flex: 1; display: flex; }
.blank span { width: 110px; border-right: 1px solid #ccc; }
.hint { height: 56px; border-top: 4px double #ccc; background: #efefef; }

.document { flex: 1; min-width: 0; display: flex; flex-direction: column; margin-left: 2px; border-left: 4px solid #d9d9d9; }
.doc-tabs { height: 22px; padding-top: 2px; }
.doc-tab { position: relative; width: 171px; height: 20px; display: flex; align-items: center; padding-left: 35px; font-size: 12px; font-weight: 700; white-space: nowrap; }
.doc-tab > svg { position: absolute; left: 0; top: 0; }
.doc-tab span { position: relative; flex: 1; }
.doc-tab button { position: relative; margin-right: 6px; }
.canvas { flex: 1; min-height: 0; background: #000; overflow: hidden; }
.ink { fill: none; stroke: #fff; stroke-width: 1; shape-rendering: crispEdges; }
.lettering { fill: #fff; }
.tag { font: bold 6px "Noto Sans CJK SC", sans-serif; text-anchor: middle; }
.cad { font: 12px "DejaVu Sans Mono", monospace; }
.block { font: 10px "Liberation Serif", "Noto Sans CJK SC", serif; }
.layouts { height: 17px; display: flex; }
.nav { width: 65px; display: flex; align-items: center; gap: 7px; padding-left: 2px; }
.sheet { position: relative; width: 48px; height: 17px; line-height: 14px; padding-right: 5px; }
.sheet > svg { position: absolute; left: 0; top: 0; }
.sheet span { position: relative; }
.sheet.on { font-weight: 700; padding-right: 2px; }

.splitter { flex: none; height: 6px; background: #cdcdcd; }
.command { flex: none; height: 40px; }
.command h2 { height: 25px; padding-left: 4px; line-height: 22px; }
.prompt { display: flex; height: 15px; padding-left: 1px; background: #fff; border-top: 1px solid #555; border-left: 1px solid #555; color: #000; font: 12px/14px "Noto Sans CJK SC", sans-serif; }
.prompt input { flex: 1; height: 14px; }
.watermark { position: absolute; right: 14px; bottom: 8px; font: 18px/24px "Liberation Sans", sans-serif; color: #d8d8d8; text-shadow: 1px 1px 1px #555; pointer-events: none; }
```
